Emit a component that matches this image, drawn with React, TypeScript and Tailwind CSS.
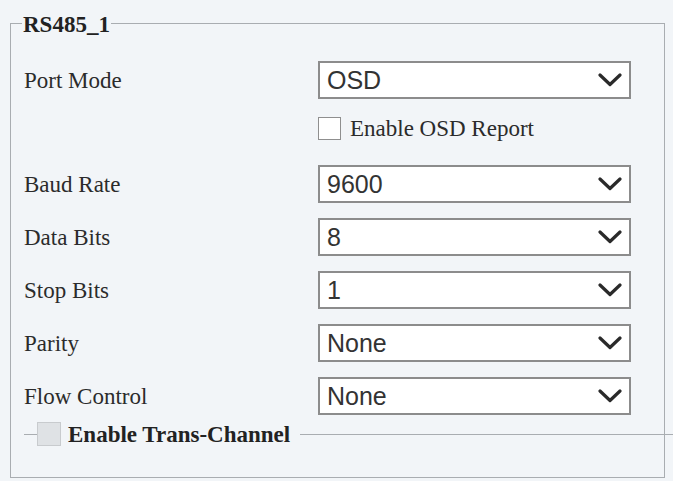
import React from "react";

const serif = { fontFamily: '"Liberation Serif", "Times New Roman", serif' };
const sans = { fontFamily: '"Liberation Sans", Arial, sans-serif' };

function Chevron() {
  return (
    <svg width="24" height="14" viewBox="0 0 24 14" className="shrink-0">
      <path d="M2 2 L12 11.5 L22 2" fill="none" stroke="#2a2a2a" strokeWidth="3.2" strokeLinecap="round" strokeLinejoin="round" />
    </svg>
  );
}

function Select({ value }: { value: string }) {
  return (
    <div
      className="w-[313px] h-[38px] border-2 border-[#8c8c8c] bg-white flex items-center justify-between pl-[7px] pr-[7px] text-[25px] text-[#333]"
      style={sans}
    >
      <span className="leading-none">{value}</span>
      <Chevron />
    </div>
  );
}

function Row({ label, value }: { label: string; value: string }) {
  return (
    <div className="flex items-center h-[38px]">
      <div className="w-[294px] text-[23px] text-[#2b2b2b] leading-none" style={serif}>
        {label}
      </div>
      <Select value={value} />
    </div>
  );
}

export default function App() {
  return (
    <div className="w-[673px] h-[481px] bg-[#f2f5f8] pt-[23px] pl-[10px] overflow-hidden">
      <div className="relative w-[655px] h-[455px] border border-[#a9adb1] pl-[13px] pt-[37px]">
        <div
          className="absolute left-[11px] top-[-14px] bg-[#f2f5f8] px-[1px] text-[23px] font-bold leading-[30px] text-[#222]"
          style={serif}
        >
          RS485_1
        </div>
        <div className="flex flex-col">
          <Row label="Port Mode" value="OSD" />
          <div className="flex items-center h-[23px] mt-[18px] pl-[294px]">
            <div className="w-[23px] h-[23px] border border-[#8f8f8f] bg-white" />
            <span className="ml-[9px] text-[23px] leading-none text-[#2b2b2b]" style={serif}>
              Enable OSD Report
            </span>
          </div>
          <div className="mt-[25px] flex flex-col gap-[15px]">
            <Row label="Baud Rate" value="9600" />
            <Row label="Data Bits" value="8" />
            <Row label="Stop Bits" value="1" />
            <Row label="Parity" value="None" />
            <Row label="Flow Control" value="None" />
          </div>
          <div className="flex items-center w-[649px] h-[24px] mt-[7px]">
            <div className="w-[13px] h-px bg-[#a9adb1]" />
            <div className="w-[24px] h-[24px] border border-[#c8cbce] bg-[#dfe2e5]" />
            <span className="ml-[7px] text-[23px] font-bold leading-none text-[#222]" style={serif}>
              Enable Trans-Channel
            </span>
            <div className="flex-1 ml-[10px] h-px bg-[#a9adb1]" />
          </div>
        </div>
      </div>
    </div>
  );
}
